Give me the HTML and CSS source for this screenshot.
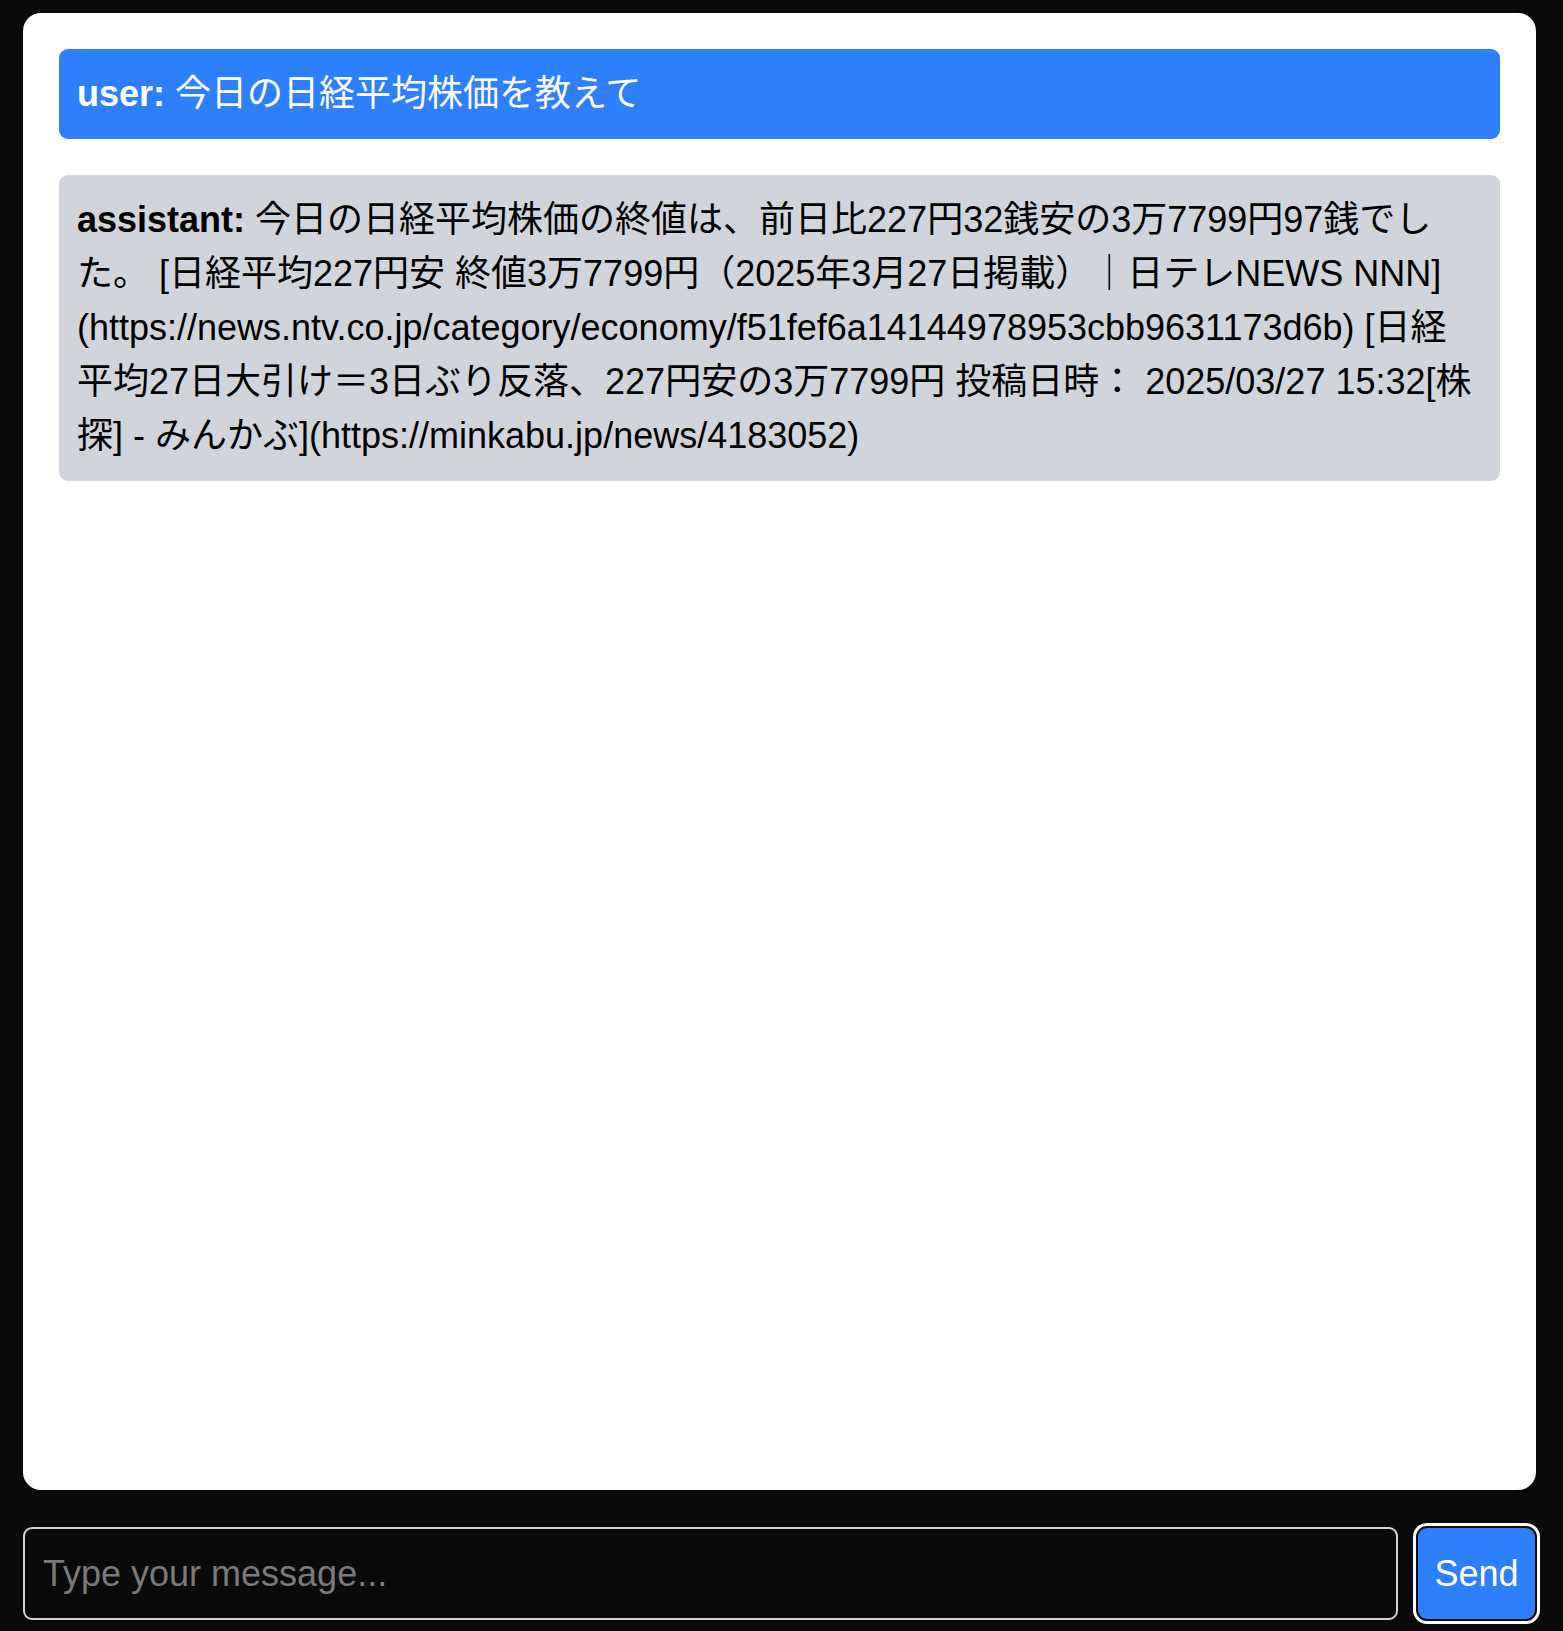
FILE: index.html
```html
<!DOCTYPE html>
<html lang="ja">
<head>
<meta charset="utf-8">
<title>Chat</title>
<link rel="stylesheet" href="styles.css">
</head>
<body>
<div class="app">
  <div class="chat">
    <div class="msg msg-user"><strong>user:</strong> 今日の日経平均株価を教えて</div>
    <div class="msg msg-assistant"><strong>assistant:</strong> 今日の日経平均株価の終値は、前日比227円32銭安の3万7799円97銭でした。 [日経平均227円安 終値3万7799円（2025年3月27日掲載）｜日テレNEWS NNN](https://news.ntv.co.jp/category/economy/f51fef6a14144978953cbb9631173d6b) [日経平均27日大引け＝3日ぶり反落、227円安の3万7799円 投稿日時： 2025/03/27 15:32[株探] - みんかぶ](https://minkabu.jp/news/4183052)</div>
  </div>
  <div class="composer">
    <input class="input" type="text" placeholder="Type your message...">
    <button class="send" type="button">Send</button>
  </div>
</div>
</body>
</html>
```
FILE: styles.css
```css
* { box-sizing: border-box; }
html, body {
  margin: 0;
  height: 100%;
  background: #0a0a0a;
}
body {
  font-family: "Liberation Sans", Arial, "Noto Sans CJK JP", sans-serif;
  font-size: 36px;
  line-height: 1.5;
}
.app {
  height: 100vh;
  display: flex;
  flex-direction: column;
  padding: 13px 27px 11px 23px;
  gap: 37px;
}
.chat {
  flex: 1;
  background: #ffffff;
  border-radius: 18px;
  padding: 36px;
  display: flex;
  flex-direction: column;
  gap: 36px;
  overflow: hidden;
}
.msg {
  padding: 18px;
  border-radius: 9px;
}
.msg strong { font-weight: 700; }
.msg-user {
  background: #2d7ffe;
  color: #ffffff;
}
.msg-assistant {
  background: #d1d5db;
  color: #000000;
}
.composer {
  display: flex;
  align-items: center;
  gap: 20px;
  padding-right: 1px;
  height: 93px;
}
.input {
  flex: 1;
  height: 93px;
  background: #0a0a0a;
  border: 2px solid #d1d5db;
  border-radius: 9px;
  padding: 0 18px;
  color: #ffffff;
  font-family: "Liberation Sans", Arial, sans-serif;
  font-size: 36px;
  outline: none;
}
.input::placeholder { color: #7a7a7a; }
.send {
  width: 117px;
  height: 91px;
  background: #2d7ffe;
  color: #ffffff;
  border: none;
  border-radius: 9px;
  font-family: "Liberation Sans", Arial, sans-serif;
  font-size: 36px;
  padding: 0;
  outline: 3px solid #ffffff;
  outline-offset: 2px;
}
```
